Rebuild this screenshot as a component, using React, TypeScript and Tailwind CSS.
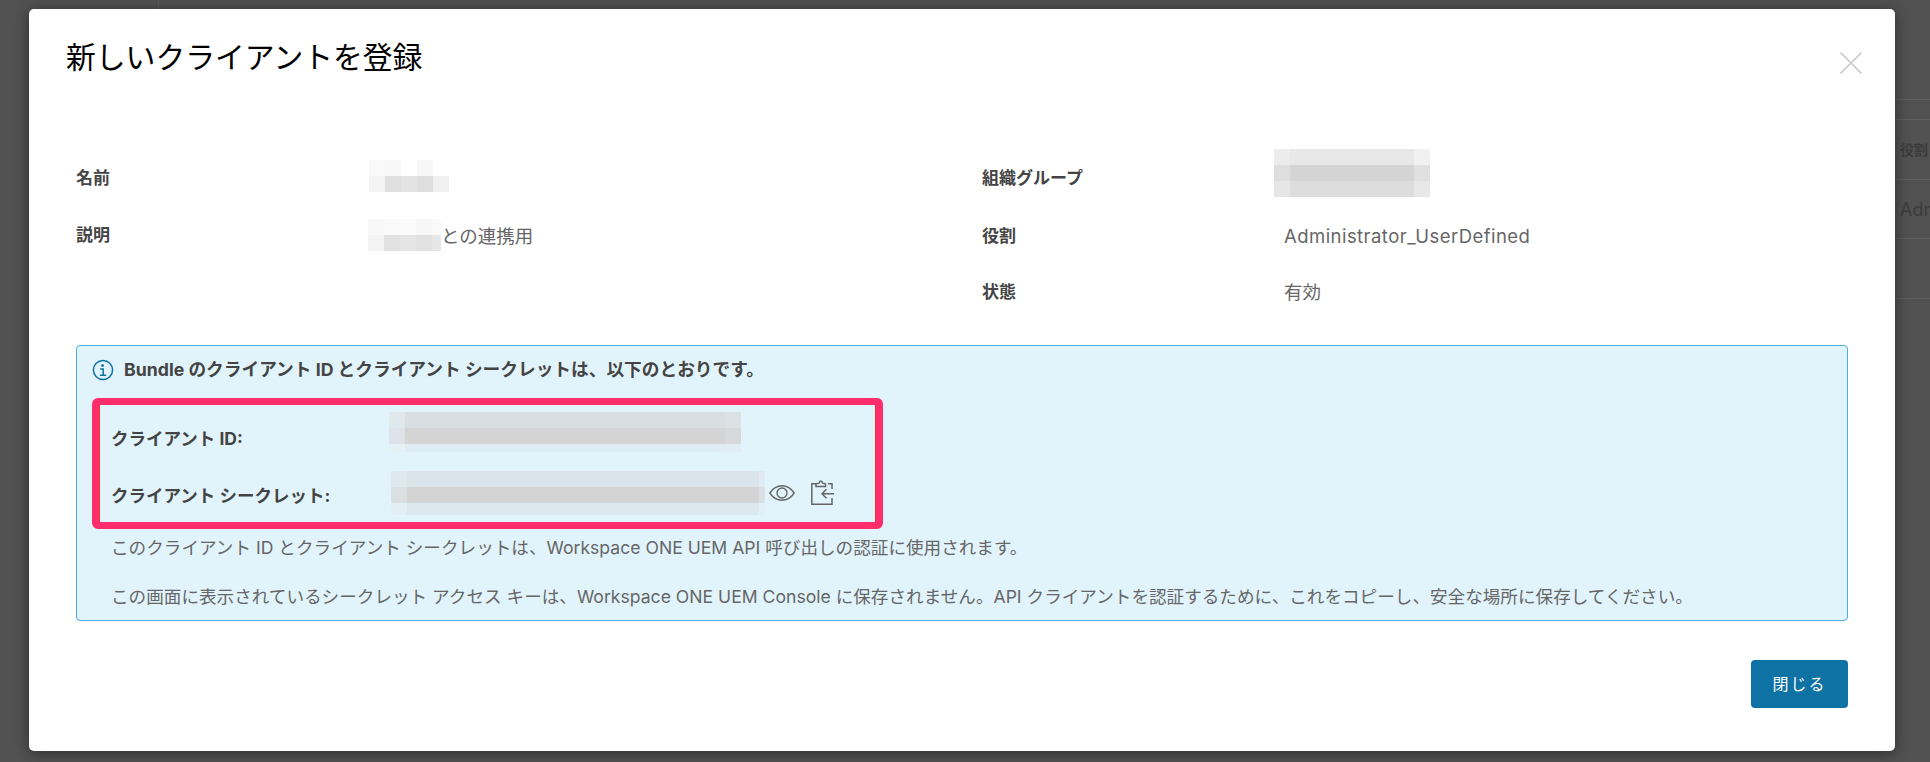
import React from 'react'

const jp = 'font-["Inter","Noto_Sans_CJK_JP",sans-serif]'

type MosaicProps = {
  className: string
  cells: string[]
}

const Mosaic: React.FC<MosaicProps> = ({ className, cells }) => (
  <div className={`grid shrink-0 ${className}`}>
    {cells.map((c, i) => (
      <div key={i} className={c} />
    ))}
  </div>
)

const Field = ({
  label,
  children,
  labelClass,
  className,
}: {
  label: string
  children: React.ReactNode
  labelClass: string
  className: string
}) => (
  <div className={`flex items-center ${className}`}>
    <div className={`shrink-0 text-[17px] font-bold text-[#444] ${labelClass}`}>{label}</div>
    <div className="flex items-center text-[18.5px] text-[#666]">{children}</div>
  </div>
)

export default function App() {
  return (
    <div className={`relative flex h-[762px] w-[1930px] overflow-hidden bg-[#515151] pl-[29px] pt-[9px] ${jp}`}>
      <div className="absolute left-[158px] top-0 h-[9px] w-px bg-[#5a5a5a]" />

      <div className="relative z-10 flex h-[742px] w-[1866px] shrink-0 flex-col rounded-[5px] bg-white px-[47px] shadow-[0_2px_14px_rgba(0,0,0,0.45)]">
        <div className="flex items-start justify-between">
          <h1 className="-ml-[10px] mt-[28px] text-[29.8px] leading-[40px] font-normal text-black">
            新しいクライアントを登録
          </h1>
          <button className="mr-[-14px] mt-[43px] text-[#cccccc]">
            <svg width="22" height="22" viewBox="0 0 22 22" fill="none" stroke="currentColor" strokeWidth="1.6">
              <path d="M0.5 0.5L21.5 21.5M21.5 0.5L0.5 21.5" />
            </svg>
          </button>
        </div>

        <div className="mt-[83px] flex">
          <div className="flex w-[906px] shrink-0 flex-col">
            <Field label="名前" labelClass="w-[293px] pt-[6px]" className="h-[32px]">
              <Mosaic
                className="grid-cols-[16px_16px_16px_16px_16px] grid-rows-[16px_16px]"
                cells={[
                  'bg-[#f9f9f9]', 'bg-[#f8f8f8]', 'bg-white', 'bg-[#f7f7f7]', 'bg-white',
                  'bg-[#f3f3f3]', 'bg-[#e0e0e0]', 'bg-[#e3e3e3]', 'bg-[#dedede]', 'bg-[#f0f0f0]',
                ]}
              />
            </Field>
            <Field label="説明" labelClass="w-[292px] pt-[2px]" className="mt-[27px] h-[32px]">
              <Mosaic
                className="grid-cols-[16px_16px_16px_16px_9px] grid-rows-[16px_16px]"
                cells={[
                  'bg-[#f8f8f8]', 'bg-[#f9f9f9]', 'bg-[#fbfbfb]', 'bg-[#f6f6f6]', 'bg-[#f9f9f9]',
                  'bg-[#f3f3f3]', 'bg-[#e1e1e1]', 'bg-[#e5e5e5]', 'bg-[#e1e1e1]', 'bg-[#e6e6e6]',
                ]}
              />
              <span className="pt-[4px]">との連携用</span>
            </Field>
          </div>
          <div className="flex flex-col">
            <Field label="組織グループ" labelClass="w-[292px] pt-[12px]" className="-mt-[11px] h-[48px]">
              <Mosaic
                className="grid-cols-[16px_124px_16px] grid-rows-[16px_16px_16px]"
                cells={[
                  'bg-[#ececec]', 'bg-[#e8e8e8]', 'bg-[#f1f1f1]',
                  'bg-[#dedede]', 'bg-[#d4d4d4]', 'bg-[#e0e0e0]',
                  'bg-[#e6e6e6]', 'bg-[#dddddd]', 'bg-[#e8e8e8]',
                ]}
              />
            </Field>
            <Field label="役割" labelClass="w-[302px]" className="mt-[24px] h-[32px]">
              <span className="tracking-[0.45px]">Administrator_UserDefined</span>
            </Field>
            <Field label="状態" labelClass="w-[302px]" className="mt-[24px] h-[32px]">
              有効
            </Field>
          </div>
        </div>

        <div className="mt-[36px] flex h-[276px] flex-col rounded-[4px] border border-[#49afd9] bg-[#e1f4fc] pl-[15px]">
          <div className="mt-[11px] flex items-center gap-[10px] text-[17.7px] font-bold text-[#444]">
            <svg width="22" height="22" viewBox="0 0 22 22" fill="none" stroke="#0f72a4" strokeWidth="1.5" strokeLinecap="round">
              <circle cx="11" cy="11" r="9.6" />
              <circle cx="10.6" cy="6.6" r="0.7" fill="#0f72a4" />
              <path d="M8.6 10H11.2V16M8.4 16.2H13.6" />
            </svg>
            Bundle のクライアント ID とクライアント シークレットは、以下のとおりです。
          </div>

          <div className="mt-[14px] flex h-[131px] w-[791px] flex-col rounded-[6px] border-[7px] border-[#ff2d6b] pl-[12px] text-[17.5px] font-bold text-[#444] shadow-[inset_1px_0_0_#f5302f,inset_-1px_0_0_#f5302f]">
            <div className="mt-[7px] flex items-center">
              <div className="w-[278px] shrink-0 pt-[14px]">クライアント ID:</div>
              <Mosaic
                className="grid-cols-[16px_320px_16px] grid-rows-[16px_16px_8px]"
                cells={[
                  'bg-[#dfe8ea]', 'bg-[#d8dfe2]', 'bg-[#dae2e5]',
                  'bg-[#dde3e8]', 'bg-[#d4d4d4]', 'bg-[#d6d8d9]',
                  'bg-[#e6f1f6]', 'bg-[#e0ecf3]', 'bg-[#e1edf3]',
                ]}
              />
            </div>
            <div className="mt-[19px] flex items-center">
              <div className="w-[280px] shrink-0 pt-[6px]">クライアント シークレット:</div>
              <Mosaic
                className="grid-cols-[16px_352px_6px] grid-rows-[16px_16px_12px]"
                cells={[
                  'bg-[#dfe8ee]', 'bg-[#dae4ea]', 'bg-[#e0ebf1]',
                  'bg-[#dadfe2]', 'bg-[#d4d4d4]', 'bg-[#d9e0e4]',
                  'bg-[#e3eef4]', 'bg-[#dce8ee]', 'bg-[#e2eff5]',
                ]}
              />
              <svg className="ml-[4px]" width="26" height="16" viewBox="0 0 26 16" fill="none" stroke="#666" strokeWidth="1.4">
                <path d="M0.8 8C4 3.2 8.4 0.8 13 0.8S22 3.2 25.2 8C22 12.8 17.6 15.2 13 15.2S4 12.8 0.8 8Z" />
                <circle cx="13" cy="8" r="5" />
              </svg>
              <svg className="ml-[16px]" width="23" height="25" viewBox="0 0 23 25" fill="none" stroke="#666" strokeWidth="1.5">
                <path d="M5 3.8H0.8V24.2H21V18M17 3.8H21V9" />
                <path d="M5 6.4H14.5V3.8L11.6 3.2C11 0.4 8.6 0.4 8 3.2L5 3.8Z" />
                <path d="M23 13.7H11M15.5 9.2L11 13.7L15.5 18.2" />
              </svg>
            </div>
          </div>

          <p className="ml-[19px] mt-[7px] text-[17.6px] leading-[24px] text-[#666]">
            このクライアント ID とクライアント シークレットは、Workspace ONE UEM API 呼び出しの認証に使用されます。
          </p>
          <p className="ml-[19px] mt-[25px] text-[17.6px] leading-[24px] text-[#666]">
            この画面に表示されているシークレット アクセス キーは、Workspace ONE UEM Console に保存されません。API クライアントを認証するために、これをコピーし、安全な場所に保存してください。
          </p>
        </div>

        <div className="mt-[39px] flex justify-end">
          <button className="h-[48px] w-[97px] rounded-[4px] bg-[#0f72a4] text-[16px] tracking-[2px] text-white">
            閉じる
          </button>
        </div>
      </div>

      <div className="flex w-[35px] flex-col overflow-hidden pt-[90px] text-[#3c3c3c]">
        <div className="h-[20px] border-t border-[#5e5e5e]" />
        <div className="flex h-[60px] items-center border-t border-[#5e5e5e] pl-[5px] text-[14px] font-bold">役割</div>
        <div className="flex h-[59px] items-center border-t border-[#5e5e5e] pl-[5px] text-[18px]">Adm</div>
        <div className="h-[60px] border-t border-[#5e5e5e]" />
        <div className="border-t border-[#5e5e5e]" />
      </div>
    </div>
  )
}
